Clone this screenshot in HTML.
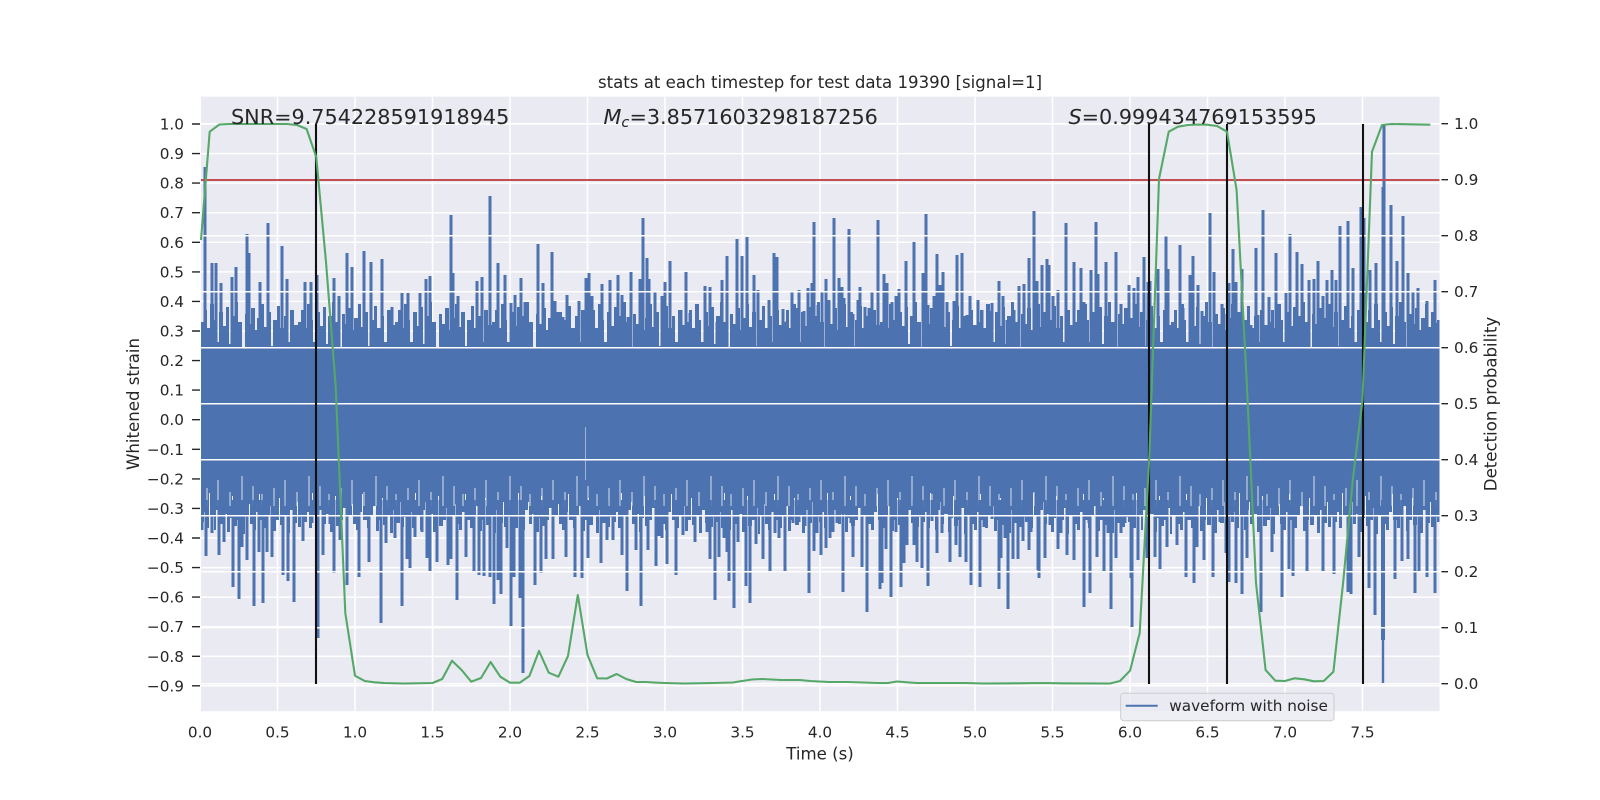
<!DOCTYPE html>
<html>
<head>
<meta charset="utf-8">
<style>
html,body{margin:0;padding:0;background:#fff;width:1600px;height:800px;overflow:hidden}
svg{display:block}
text{font-family:"DejaVu Sans",sans-serif;fill:#262626}
.t{font-size:15.28px}
.l{font-size:16.6px}
.b{font-size:20.76px}
</style>
</head>
<body>
<svg width="1600" height="800" viewBox="0 0 1600 800" xmlns="http://www.w3.org/2000/svg">
<defs>
<pattern id="pt" patternUnits="userSpaceOnUse" x="201" y="292" width="97" height="60">
<path fill="#4c72b0" d="M0 60V30H3V18H6V36H9V12H13V28H15V50H18V20H22V34H25V15H28V52H30V24H34V10H37V30H41V55H44V22H47V32H50V16H54V38H56V26H60V12H63V35H66V20H70V54H72V28H76V14H79V36H83V24H86V50H89V18H93V33H97V60Z"/>
</pattern>
<pattern id="pb" patternUnits="userSpaceOnUse" x="201" y="490" width="103" height="55">
<path fill="#4c72b0" d="M0 0V32H3V22H5V38H8V3H9V26H13V40H15V20H18V12H19V34H22V24H26V42H29V28H31V6H32V36H36V30H39V18H42V44H44V26H48V14H49V34H52V40H55V22H58V4H59V30H63V38H66V26H69V16H72V41H75V30H78V8H79V35H83V25H86V43H89V20H92V33H96V12H97V37H100V27H103V0Z"/>
</pattern>
<pattern id="ps" patternUnits="userSpaceOnUse" x="201" y="476" width="67" height="30">
<path stroke="#eaeaf2" stroke-width="1.2" stroke-opacity=".75" fill="none" d="M6 12V30M17 4V30M29 16V30M41 0V30M52 10V30M61 18V30"/>
</pattern>
<clipPath id="ax"><rect x="201" y="96.7" width="1238.5" height="614.5"/></clipPath>
</defs>
<rect x="201" y="96.7" width="1238.5" height="614.5" fill="#eaeaf2"/>
<g clip-path="url(#ax)">
<g stroke="#fff" stroke-width="1.5" fill="none">
<path d="M200 124H1440M200 153.6H1440M200 183.1H1440M200 212.7H1440M200 242.3H1440M200 271.9H1440M200 301.4H1440M200 331H1440M200 360.6H1440M200 390.1H1440M200 419.7H1440M200 449.3H1440M200 478.9H1440M200 508.4H1440M200 538H1440M200 567.6H1440M200 597.1H1440M200 626.7H1440M200 656.3H1440M200 685.8H1440"/>
<path d="M200 96V712M277.5 96V712M355 96V712M432.5 96V712M510 96V712M587.5 96V712M665 96V712M742.5 96V712M820 96V712M897.5 96V712M975 96V712M1052.5 96V712M1130 96V712M1207.5 96V712M1285 96V712M1362.5 96V712"/>
</g>
<rect x="201" y="292" width="1239" height="60" fill="url(#pt)"/>
<rect x="201" y="350" width="1239" height="142" fill="#4c72b0"/>
<rect x="201" y="490" width="1239" height="55" fill="url(#pb)"/>
<rect x="201" y="476" width="1239" height="30" fill="url(#ps)"/>
<path stroke="#4c72b0" stroke-width="3" fill="none" d="M205 167V350M212 263V350M216 263V350M221 283V350M232 277V350M236 267V350M247 234V350M249 253V350M260 282V350M268 223V350M282 246V350M287 279V350M305 282V350M311 282V350M317 275V350M334 278V350M339 296V350M347 253V350M352 267V350M364 251V350M371 262V350M382 259V350M392 307V350M402 293V350M408 293V350M420 293V350M426 279V350M430 276V350M451 215V350M453 273V350M458 296V350M477 281V350M482 277V350M490 196V350M498 263V350M505 275V350M511 303V350M515 295V350M521 278V350M525 302V350M538 244V350M543 283V350M552 252V350M555 301V350M558 312V350M563 317V350M567 295V350M579 301V350M586 278V350M589 273V350M592 296V350M602 284V350M610 280V350M618 275V350M622 295V350M628 317V350M631 272V350M640 279V350M643 218V350M647 258V350M649 279V350M655 292V350M662 296V350M665 282V350M670 261V350M681 310V350M686 272V350M690 313V350M697 317V350M705 286V350M710 287V350M717 322V350M722 280V350M727 256V350M737 239V350M742 256V350M747 237V350M754 275V350M758 290V350M763 323V350M769 300V350M774 253V350M777 257V350M783 309V350M787 321V350M792 291V350M796 308V350M799 290V350M804 311V350M808 288V350M812 283V350M814 222V350M818 305V350M822 291V350M826 279V350M829 300V350M834 218V350M839 278V350M842 287V350M844 298V350M849 229V350M853 314V350M858 300V350M860 287V350M865 307V350M869 308V350M872 291V350M878 220V350M884 274V350M887 283V350M892 302V350M896 296V350M899 289V350M906 261V350M914 242V350M923 273V350M926 214V350M928 305V350M934 296V350M937 254V350M940 285V350M943 272V350M947 302V350M954 301V350M957 255V350M962 253V350M967 315V350M970 296V350M978 300V350M982 310V350M989 311V350M992 303V350M999 281V350M1003 296V350M1007 320V350M1014 310V350M1019 286V350M1024 284V350M1029 258V350M1034 211V350M1037 281V350M1042 265V350M1047 259V350M1049 265V350M1053 296V350M1058 290V350M1066 223V350M1074 262V350M1081 268V350M1084 302V350M1091 270V350M1096 222V350M1098 274V350M1106 262V350M1116 252V350M1121 304V350M1129 285V350M1134 288V350M1138 277V350M1144 257V350M1148 282V350M1150 281V350M1158 269V350M1166 235V350M1168 269V350M1180 245V350M1183 308V350M1190 275V350M1193 256V350M1198 285V350M1202 311V350M1210 213V350M1214 272V350M1222 304V350M1224 314V350M1229 283V350M1233 249V350M1236 282V350M1242 269V350M1248 333V350M1251 325V350M1256 248V350M1258 315V350M1263 210V350M1269 297V350M1276 253V350M1279 317V350M1286 293V350M1290 234V350M1297 252V350M1302 264V350M1309 280V350M1314 279V350M1318 261V350M1323 296V350M1327 280V350M1332 270V350M1336 280V350M1340 226V350M1348 221V350M1353 268V350M1361 207V350M1364 218V350M1370 270V350M1376 263V350M1383 187V350M1384 124V350M1391 205V350M1397 261V350M1403 216V350M1408 273V350M1413 291V350M1418 288V350M1427 301V350M1435 280V350M1438 323V350"/>
<path stroke="#4c72b0" stroke-width="3" fill="none" d="M202 500V530M206 500V556M212 500V533M219 500V555M224 500V542M233 500V587M239 500V599M242 500V547M247 500V560M254 500V606M259 500V552M263 500V603M267 500V552M272 500V557M283 500V575M288 500V581M294 500V602M303 500V541M312 500V523M318 500V638M323 500V555M330 500V524M334 500V573M340 500V540M347 500V585M359 500V577M369 500V562M381 500V623M386 500V543M395 500V538M402 500V606M407 500V559M410 500V568M415 500V537M422 500V532M427 500V558M430 500V572M437 500V562M448 500V565M451 500V559M457 500V600M466 500V557M474 500V571M479 500V575M484 500V576M490 500V577M494 500V604M498 500V580M501 500V594M507 500V548M511 500V626M514 500V577M520 500V598M523 500V673M535 500V585M541 500V573M546 500V559M553 500V559M566 500V557M575 500V577M582 500V578M588 500V558M601 500V563M607 500V540M613 500V540M622 500V555M627 500V591M636 500V550M641 500V606M648 500V550M656 500V566M659 500V536M662 500V538M667 500V564M676 500V575M683 500V535M695 500V542M707 500V532M710 500V559M715 500V600M719 500V557M724 500V538M727 500V552M729 500V581M734 500V608M738 500V542M746 500V586M750 500V603M756 500V544M763 500V559M770 500V572M775 500V533M779 500V538M785 500V572M793 500V523M799 500V522M805 500V526M809 500V593M814 500V551M817 500V533M821 500V555M826 500V548M830 500V538M833 500V532M837 500V523M843 500V592M851 500V523M853 500V557M862 500V567M867 500V612M880 500V589M882 500V583M886 500V549M891 500V597M896 500V532M901 500V587M904 500V563M907 500V545M914 500V545M917 500V562M922 500V568M928 500V586M932 500V521M937 500V553M942 500V533M950 500V562M956 500V545M960 500V557M966 500V562M971 500V585M980 500V587M984 500V527M992 500V519M999 500V589M1001 500V558M1005 500V538M1008 500V609M1013 500V559M1018 500V559M1023 500V541M1029 500V550M1031 500V532M1038 500V570M1039 500V578M1045 500V558M1050 500V525M1058 500V549M1061 500V533M1067 500V555M1074 500V560M1084 500V607M1089 500V523M1090 500V593M1097 500V557M1104 500V572M1108 500V533M1111 500V609M1116 500V558M1121 500V533M1125 500V523M1131 500V578M1132 500V628M1138 500V560M1147 500V558M1155 500V557M1160 500V569M1167 500V547M1177 500V545M1186 500V577M1194 500V583M1197 500V547M1204 500V560M1213 500V577M1220 500V522M1226 500V553M1229 500V582M1236 500V583M1242 500V594M1247 500V558M1261 500V612M1272 500V552M1282 500V597M1289 500V569M1293 500V576M1307 500V572M1323 500V571M1334 500V574M1348 500V592M1351 500V594M1359 500V557M1369 500V588M1375 500V615M1395 500V579M1402 500V561M1408 500V559M1415 500V593M1419 500V572M1427 500V577M1435 500V593"/>
<path stroke="#4c72b0" stroke-width="4" fill="none" d="M1383 500V640"/>
<path stroke="#4c72b0" stroke-width="2.4" fill="none" d="M1383 640V683"/>
<path stroke="#eaeaf2" stroke-width="1" opacity=".55" fill="none" d="M585.5 427V480"/>
</g>
<path stroke="#fff" stroke-width="1.5" fill="none" d="M201 123.7H1439.5M201 179.7H1439.5M201 235.7H1439.5M201 291.7H1439.5M201 347.7H1439.5M201 403.7H1439.5M201 459.7H1439.5M201 515.7H1439.5M201 571.7H1439.5M201 627.7H1439.5M201 683.7H1439.5"/>
<path stroke="#c44e52" stroke-width="2.1" fill="none" d="M201 180H1439.5"/>
<path stroke="#111" stroke-width="2.1" fill="none" d="M316 124V684M1149 124V684M1227 124V684M1363 124V684"/>
<polyline fill="none" stroke="#55a868" stroke-width="2.1" stroke-linejoin="round" points="201,240 209.7,131.7 219.4,124.5 229,124 287,124 296.9,125 306.6,129 316.25,157 326,262 335.6,385 345.3,613 355,675.7 364.7,681 374.4,682.3 384,683 403.7,683.5 432.5,683 442.2,679 452,660.7 461.6,670 471.25,681.7 481,678 490.6,662 500.3,676.7 510,682.7 519.7,682.7 529.4,676 539,651 548.75,672.7 558.4,676.7 568,656 577.8,595 587.5,655 597.2,678.3 606.9,678.5 616.6,674 626.25,679 636,682 645.6,682 655,682.6 665,683 684.4,683.5 713,683 733,682.5 742,681 752,679.5 762,679 781,680 800,680 810,681 829,682 848,682 878,683 888,683 897,681.5 907,682.3 917,683 965,683 984,683.5 1013,683.3 1042,683 1062,683.3 1110,683.5 1120,681 1130,670.7 1139.7,633 1149.4,455 1159,179 1168.75,131.7 1178,126.7 1188,125 1198,124.5 1207,124.7 1217,126 1227,131.7 1236.6,190 1246.4,375 1256,583 1265.6,670 1275.3,680.7 1285,681 1294.7,678.3 1304.4,679.3 1314,681.3 1323.75,681 1333.4,671.7 1343.1,583 1352.8,480 1362.5,400 1372,151.7 1382,125 1391.6,124 1430.3,124.7"/>
<g stroke="#262626" stroke-width="1.4" fill="none">
<path d="M192 124H200M192 153.6H200M192 183.1H200M192 212.7H200M192 242.3H200M192 271.9H200M192 301.4H200M192 331H200M192 360.6H200M192 390.1H200M192 419.7H200M192 449.3H200M192 478.9H200M192 508.4H200M192 538H200M192 567.6H200M192 597.1H200M192 626.7H200M192 656.3H200M192 685.8H200"/>
<path d="M1441.5 123.7H1448M1441.5 179.7H1448M1441.5 235.7H1448M1441.5 291.7H1448M1441.5 347.7H1448M1441.5 403.7H1448M1441.5 459.7H1448M1441.5 515.7H1448M1441.5 571.7H1448M1441.5 627.7H1448M1441.5 683.7H1448"/>
</g>
<g text-anchor="end">
<text class="t" x="184" y="129.5">1.0</text>
<text class="t" x="184" y="159">0.9</text>
<text class="t" x="184" y="188.6">0.8</text>
<text class="t" x="184" y="218.2">0.7</text>
<text class="t" x="184" y="247.8">0.6</text>
<text class="t" x="184" y="277.4">0.5</text>
<text class="t" x="184" y="306.9">0.4</text>
<text class="t" x="184" y="336.5">0.3</text>
<text class="t" x="184" y="366.1">0.2</text>
<text class="t" x="184" y="395.6">0.1</text>
<text class="t" x="184" y="425.2">0.0</text>
<text class="t" x="184" y="454.8">−0.1</text>
<text class="t" x="184" y="484.4">−0.2</text>
<text class="t" x="184" y="513.9">−0.3</text>
<text class="t" x="184" y="543.5">−0.4</text>
<text class="t" x="184" y="573.1">−0.5</text>
<text class="t" x="184" y="602.6">−0.6</text>
<text class="t" x="184" y="632.2">−0.7</text>
<text class="t" x="184" y="661.8">−0.8</text>
<text class="t" x="184" y="691.3">−0.9</text>
</g>
<g>
<text class="t" x="1454" y="129.2">1.0</text>
<text class="t" x="1454" y="185.2">0.9</text>
<text class="t" x="1454" y="241.2">0.8</text>
<text class="t" x="1454" y="297.2">0.7</text>
<text class="t" x="1454" y="353.2">0.6</text>
<text class="t" x="1454" y="409.2">0.5</text>
<text class="t" x="1454" y="465.2">0.4</text>
<text class="t" x="1454" y="521.2">0.3</text>
<text class="t" x="1454" y="577.2">0.2</text>
<text class="t" x="1454" y="633.2">0.1</text>
<text class="t" x="1454" y="689.2">0.0</text>
</g>
<g text-anchor="middle">
<text class="t" x="200" y="737.5">0.0</text>
<text class="t" x="277.5" y="737.5">0.5</text>
<text class="t" x="355" y="737.5">1.0</text>
<text class="t" x="432.5" y="737.5">1.5</text>
<text class="t" x="510" y="737.5">2.0</text>
<text class="t" x="587.5" y="737.5">2.5</text>
<text class="t" x="665" y="737.5">3.0</text>
<text class="t" x="742.5" y="737.5">3.5</text>
<text class="t" x="820" y="737.5">4.0</text>
<text class="t" x="897.5" y="737.5">4.5</text>
<text class="t" x="975" y="737.5">5.0</text>
<text class="t" x="1052.5" y="737.5">5.5</text>
<text class="t" x="1130" y="737.5">6.0</text>
<text class="t" x="1207.5" y="737.5">6.5</text>
<text class="t" x="1285" y="737.5">7.0</text>
<text class="t" x="1362.5" y="737.5">7.5</text>
</g>
<text class="l" x="820" y="88" text-anchor="middle">stats at each timestep for test data 19390 [signal=1]</text>
<text class="l" x="820" y="759.5" text-anchor="middle">Time (s)</text>
<text class="l" transform="translate(139 404) rotate(-90)" text-anchor="middle">Whitened strain</text>
<text class="l" transform="translate(1496.5 404) rotate(-90)" text-anchor="middle">Detection probability</text>
<text class="b" x="231" y="124">SNR=9.754228591918945</text>
<text class="b" x="603.5" y="124"><tspan font-style="italic">M</tspan><tspan font-style="italic" font-size="14.6" dy="3">c</tspan><tspan dy="-3">=3.8571603298187256</tspan></text>
<text class="b" x="1068.5" y="124"><tspan font-style="italic">S</tspan>=0.999434769153595</text>
<rect x="1120.7" y="693.3" width="213.3" height="27.4" rx="3" fill="#eaeaf2" fill-opacity=".8" stroke="#ccc" stroke-width="1"/>
<path d="M1125.7 705.7H1157.7" stroke="#4c72b0" stroke-width="2"/>
<text class="t" x="1169.3" y="711">waveform with noise</text>
</svg>
</body>
</html>
